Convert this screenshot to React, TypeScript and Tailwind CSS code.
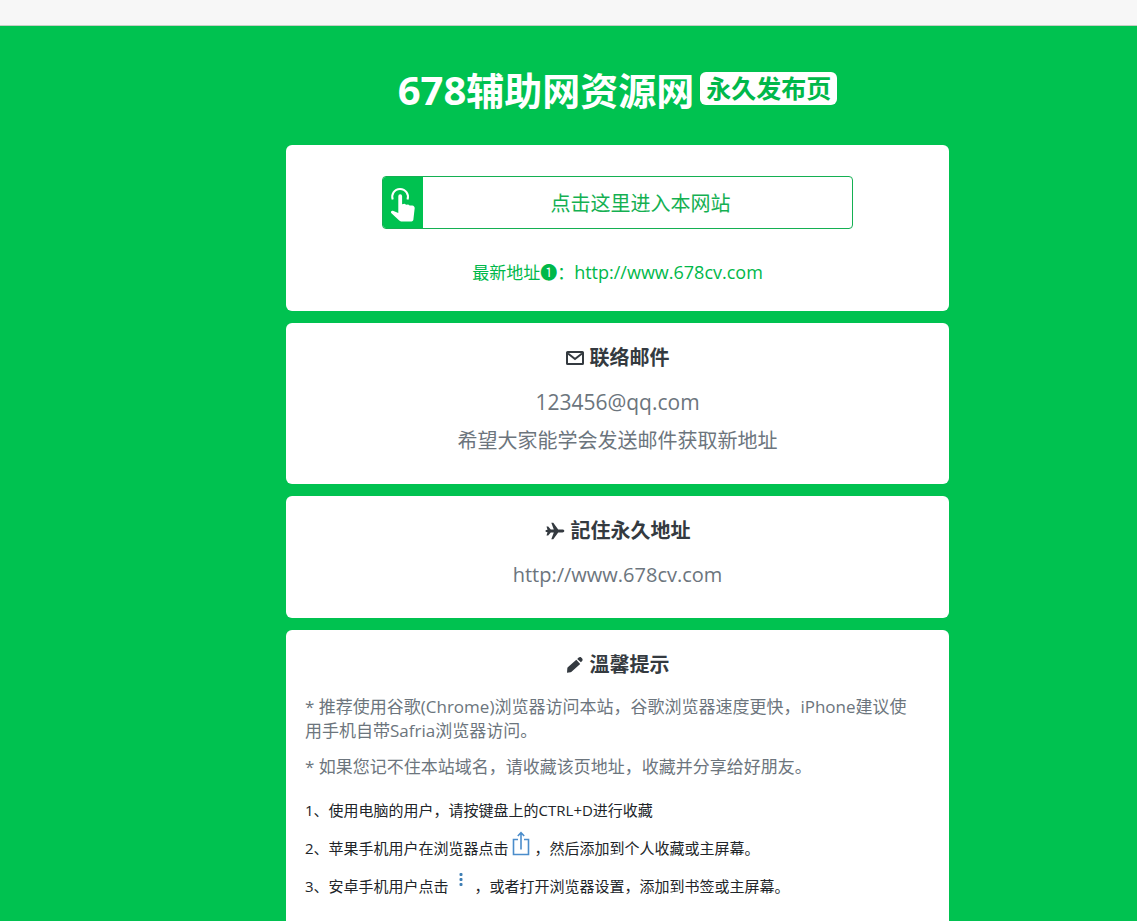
import type { ReactNode } from 'react';

function TapIcon() {
  return (
    <svg viewBox="0 0 26 36" className="h-9 w-[26px]" fill="none" aria-hidden="true">
      <path d="M2.700 12.500C1 7.500 4.200 2 10 2s9.300 5.500 7.500 10.500" stroke="white" strokeWidth="2" />
      <path
        d="M8.300 9.200a1.900 1.900 0 0 1 3.800 0v8l2.500-.5 1.600 1 2-.3 1.500 1 2.600 0c1.500.3 2.400 1.200 2.400 2.600l-1.300 11.500c-.1 1-.8 1.900-1.900 1.900H11c-.7 0-1.300-.3-1.800-.8L1.200 26c-.8-1 .2-2.600 1.700-2.300l5.400 2.200z"
        fill="white"
      />
    </svg>
  );
}

function MailIcon() {
  return (
    <svg viewBox="0 0 18 14" className="h-3.5 w-[18px]" fill="none" stroke="currentColor" strokeWidth="2" aria-hidden="true">
      <rect x="1" y="1" width="16" height="12" rx=".6" />
      <path d="M2 2.500l7 5.500 7-5.500" />
    </svg>
  );
}

function PlaneIcon() {
  return (
    <svg viewBox="0 0 20 18" className="h-[18px] w-5" fill="currentColor" aria-hidden="true">
      <path d="M1.500 4.500h1.700L5.800 7.600h3L6.300.8h2L13.200 7.600h4.300c1 0 1.800.6 1.800 1.400s-.8 1.400-1.800 1.400h-4.300L8.300 17.200h-2L8.800 10.400h-3L3.200 13.500H1.500L2.500 10.200.6 9.800V8.200l1.900-.4z" />
    </svg>
  );
}

function PencilIcon() {
  return (
    <svg viewBox="0 0 18 18" className="h-[18px] w-[18px]" fill="currentColor" aria-hidden="true">
      <path d="M1 16.800l.3-4.300c0-.5.2-.9.500-1.200l8.500-7.600 3.900 4.200-8.400 7.700c-.3.3-.7.500-1.200.6z" />
      <path d="M11.200 2.900l1.500-1.300c.7-.6 1.700-.7 2.500-.1l1 1.100c.6.8.6 1.800-.1 2.400l-1.200 1.200z" />
    </svg>
  );
}

function ShareIcon() {
  return (
    <svg viewBox="0 0 18 26" className="mr-[5px] ml-[3px] inline-block h-[26px] w-[18px] align-[-3px]" fill="none" stroke="#4b8dcb" strokeWidth="1.600" aria-hidden="true">
      <path d="M6 8.500H1.500v15h15V8.500H12M9 18.500V1.700M5.800 5L9 1.700 12.200 5" />
    </svg>
  );
}

function DotsIcon() {
  return (
    <svg viewBox="0 0 18 26" className="mr-[5px] ml-[3px] inline-block h-[26px] w-[18px] align-[-3px]" fill="#3f7fb5" aria-hidden="true">
      <rect x="7.500" y="4" width="3" height="3" rx="1" />
      <rect x="7.500" y="9" width="3" height="3" rx="1" />
      <rect x="7.500" y="14" width="3" height="3" rx="1" />
    </svg>
  );
}

function Heading({ icon, children }: { icon: ReactNode; children: ReactNode }) {
  return (
    <h2 className="flex items-center justify-center gap-1.5 text-[20px] leading-6 font-bold text-[#343a40]">
      {icon}
      <span>{children}</span>
    </h2>
  );
}

export default function App() {
  return (
    <div className={'flex min-h-screen flex-col bg-[#00c250] font-["Open_Sans","Noto_Sans_CJK_SC",sans-serif]'}>
      <div className="h-[26px] border-b border-[#c4cfc4] bg-[#f7f7f7]" />
      <main className="flex flex-col pt-11 pl-[98px]">
        <div className="mx-auto flex w-full max-w-[663px] flex-col">
          <h1 className="flex items-center justify-center gap-1.5 text-[38px] leading-10 font-bold text-white">
            <span>
              <span className="text-[40px]">678</span>辅助网资源网
            </span>
            <span className="mb-1 rounded-md bg-white px-1.5 text-[25px] leading-[33px] text-[#00b84a]">永久发布页</span>
          </h1>

          <div className="mt-[35px] flex flex-col gap-3">
            <section className="flex flex-col items-center rounded-md bg-white pt-[31px] pb-[26px]">
              <a href="http://www.678cv.com" className="flex h-[53px] w-[71%] overflow-hidden rounded border border-[#14b052] text-[20px] text-[#14b052]">
                <span className="flex w-10 items-center justify-center bg-[#00c250] pt-1">
                  <TapIcon />
                </span>
                <span className="flex flex-1 items-center justify-center pt-0.5 pl-1.5">点击这里进入本网站</span>
              </a>
              <p className="mt-[31px] flex items-baseline text-[17px] leading-6 text-[#00b84a]">
                <span>最新地址❶：</span>
                <a href="http://www.678cv.com" className="text-[18px] leading-6">http://www.678cv.com</a>
              </p>
            </section>

            <section className="rounded-md bg-white pt-[23px] pb-[31px] text-center text-[20px] leading-6 text-[#6c757d]">
              <Heading icon={<MailIcon />}>联络邮件</Heading>
              <p className="mt-5 text-[21px] leading-6">123456@qq.com</p>
              <p className="mt-[15px]">希望大家能学会发送邮件获取新地址</p>
            </section>

            <section className="rounded-md bg-white pt-[23px] pb-[31px] text-center text-[20px] leading-6 text-[#6c757d]">
              <Heading icon={<PlaneIcon />}>記住永久地址</Heading>
              <p className="mt-5">http://www.678cv.com</p>
            </section>

            <section className="rounded-t-md bg-white px-[19px] pt-[23px] pb-6 text-[#6c757d]">
              <Heading icon={<PencilIcon />}>溫馨提示</Heading>
              <div className="mt-[18px] flex flex-col gap-3 pr-4 text-[17px] leading-6">
                <p>* 推荐使用谷歌(Chrome)浏览器访问本站，谷歌浏览器速度更快，iPhone建议使用手机自带Safria浏览器访问。</p>
                <p>* 如果您记不住本站域名，请收藏该页地址，收藏并分享给好朋友。</p>
              </div>
              <div className="mt-3 text-[15px] leading-[38px] text-[#212529]">
                <p>1、使用电脑的用户，请按键盘上的CTRL+D进行收藏</p>
                <p>2、苹果手机用户在浏览器点击<ShareIcon />，然后添加到个人收藏或主屏幕。</p>
                <p>3、安卓手机用户点击<DotsIcon />，或者打开浏览器设置，添加到书签或主屏幕。</p>
              </div>
            </section>
          </div>
        </div>
      </main>
    </div>
  );
}
